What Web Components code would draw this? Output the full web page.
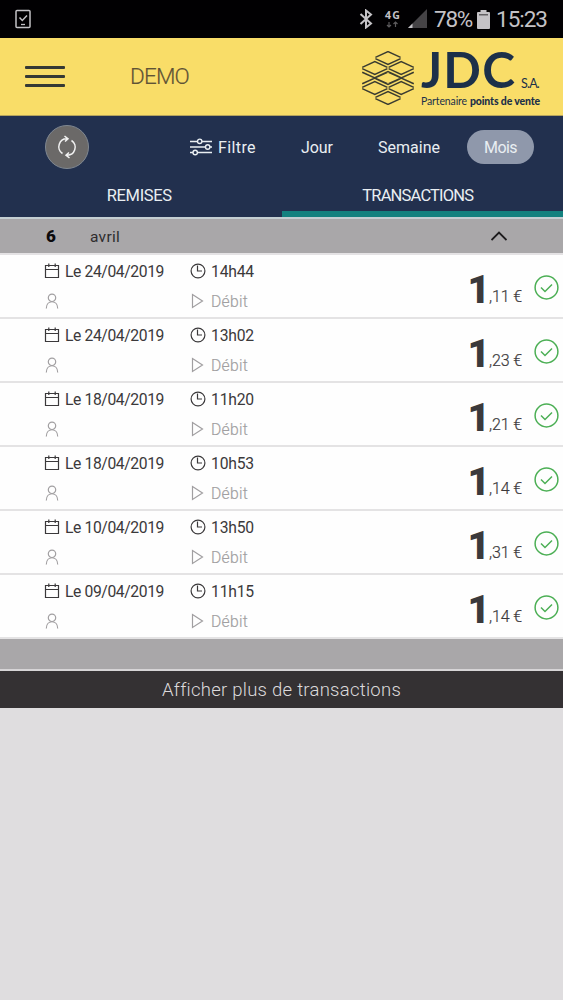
<!DOCTYPE html>
<html lang="fr">
<head>
<meta charset="utf-8">
<title>Transactions</title>
<style>
html, body { margin: 0; background: #dfdddf; }
body { font-family: Roboto, "Liberation Sans", sans-serif; }
</style>
</head>
<body>
<pos-app></pos-app>
<script>
// Text set to a given width by spreading its letters
class FitText extends HTMLElement {
  constructor() {
    super();
    this.attachShadow({ mode: 'open' });
    this.shadowRoot.innerHTML = `
    <style>
    :host { display: inline-block; white-space: nowrap; }
    span { display: inline-block; }
    </style>
    <span><slot></slot></span>
    `;
  }

  connectedCallback() {
    const width = parseFloat(this.getAttribute('width'));
    const span = this.shadowRoot.querySelector('span');
    span.style.letterSpacing = '0';
    const natural = span.getBoundingClientRect().width;
    const count = this.textContent.length;
    if (width && natural) {
      span.style.letterSpacing = `${(width - natural) / count}px`;
    }
  }
}
customElements.define('fit-text', FitText);

class StatusBar extends HTMLElement {
  constructor() {
    super();
    this.attachShadow({ mode: 'open' });
    this.shadowRoot.innerHTML = `
    <style>
    :host {
      display: flex;
      align-items: center;
      height: 38px;
      box-sizing: border-box;
      padding: 0 16px 0 15px;
      background: #010002;
      color: #c4c2c6;
      font-size: 22.5px;
    }
    svg { display: block; flex: none; }
    .spacer { flex: 1; }
    .net { margin: 0 7px 0 12px; }
    .net b { display: block; font: 700 10.5px/11px "Noto Sans", sans-serif; }
    .battery { margin: 0 6px 0 5px; }
    </style>
    <svg width="16" height="20" viewBox="0 0 16 20" fill="none" stroke="#c4c2c6">
      <rect x="1" y="1.5" width="14" height="17" rx="1" stroke-width="1.5"/>
      <path d="M4.5 8.5l2.8 3L12 6.5" stroke-width="1.5"/>
      <path d="M6 15.5h4" stroke-width="1.3"/>
    </svg>
    <div class="spacer"></div>
    <svg width="14" height="20" viewBox="0 0 14 20" fill="none" stroke="#c4c2c6" stroke-width="2">
      <path d="M1.5 5L12 14.5L7 18.5V1.5L12 5.5L1.5 15"/>
    </svg>
    <div class="net">
      <b><fit-text width="16">4G</fit-text></b>
      <svg width="16" height="7" viewBox="0 0 16 7" fill="none" stroke="#5d5b5e" stroke-width="1.2">
        <path d="M4 1v5M2 4l2 2l2-2M10.5 6V1M8.5 3l2-2l2 2"/>
      </svg>
    </div>
    <svg width="19" height="20" viewBox="0 0 19 20">
      <path d="M19 0V19H0z" fill="#454346"/>
      <path d="M4.5 14.5V19H0z" fill="#c4c2c6"/>
    </svg>
    <fit-text width="38" style="margin-left:7px">78%</fit-text>
    <svg class="battery" width="13" height="19" viewBox="0 0 13 19">
      <path d="M3.5 0h6v2H12q1 0 1 1v15q0 1-1 1H1q-1 0-1-1V3q0-1 1-1h2.5z" fill="#c4c2c6"/>
      <path d="M2 4h9v1.5H2z" fill="#636164"/>
    </svg>
    <fit-text width="51">15:23</fit-text>
    `;
  }
}
customElements.define('status-bar', StatusBar);

class JdcLogo extends HTMLElement {
  constructor() {
    super();
    // centres of the seven tiles of the mark
    const tiles = [[27, 7], [13.8, 17], [40.2, 17], [27, 27], [13.8, 37], [40.2, 37], [27, 47]];
    const up = (x, y) => `M${x - 12.6} ${y - 0.6}L${x} ${y - 6.4}L${x + 12.6} ${y - 0.6}`;
    const down = (x, y) => `M${x - 12.6} ${y + 0.6}L${x} ${y + 6.4}L${x + 12.6} ${y + 0.6}`;
    // the outer columns carry a second edge between their tiles
    const d = tiles.map(([x, y]) => up(x, y) + down(x, y)).join('')
      + [13.8, 40.2].map((x) => down(x, 20.6) + up(x, 33.4)).join('');
    this.attachShadow({ mode: 'open' });
    this.shadowRoot.innerHTML = `
    <style>
    :host { display: flex; color: #1c3049; padding-top: 4px; }
    svg { display: block; flex: none; margin-top: 1px; }
    .words { margin-left: 6px; font-family: Lato, sans-serif; }
    .name { display: flex; align-items: baseline; height: 45px; line-height: 39px; font-size: 49.5px; font-weight: 700; }
    .sa { font-size: 12.5px; font-weight: 400; margin: 0 -1px 0 5px; }
    .tag { font-size: 10.5px; line-height: 12px; white-space: nowrap; }
    .tag b { font-weight: 900; margin-left: 3px; }
    </style>
    <svg width="54" height="54" viewBox="0 0 54 54" fill="none" stroke="#3b3c31" stroke-width="1.5">
      <path d="${d}"/>
    </svg>
    <div class="words">
      <div class="name"><fit-text width="95">JDC</fit-text><fit-text class="sa" width="18">S.A.</fit-text></div>
      <div class="tag"><fit-text width="46">Partenaire</fit-text><b><fit-text width="70">points de vente</fit-text></b></div>
    </div>
    `;
  }
}
customElements.define('jdc-logo', JdcLogo);

class AppHeader extends HTMLElement {
  constructor() {
    super();
    this.attachShadow({ mode: 'open' });
    this.shadowRoot.innerHTML = `
    <style>
    :host {
      display: flex;
      align-items: center;
      height: 78px;
      box-sizing: border-box;
      padding: 0 23px 0 25px;
      background: #f9dd68;
      border-bottom: 1px solid #b5a35d;
    }
    .burger { display: grid; gap: 5.5px; width: 40px; }
    .burger i { height: 3.6px; border-radius: 1px; background: #363934; }
    .title { margin: -1px 0 0 65px; font-size: 22.5px; font-weight: 300; color: #5f5336; -webkit-text-stroke: 0.2px #5f5336; }
    jdc-logo { margin-left: auto; }
    </style>
    <div class="burger"><i></i><i></i><i></i></div>
    <fit-text class="title" width="59">${this.getAttribute('merchant')}</fit-text>
    <jdc-logo></jdc-logo>
    `;
  }
}
customElements.define('app-header', AppHeader);

class FilterBar extends HTMLElement {
  constructor() {
    super();
    this.attachShadow({ mode: 'open' });
    this.shadowRoot.innerHTML = `
    <style>
    :host {
      display: flex;
      align-items: center;
      height: 62px;
      color: #e9eef2;
      font-size: 16px;
      padding-left: 45px;
    }
    svg { display: block; }
    .refresh {
      width: 44px;
      height: 44px;
      box-sizing: border-box;
      border: 1px solid #7f8791;
      border-radius: 50%;
      background: #6b6968;
      display: grid;
      place-items: center;
    }
    .sliders { margin: 0 6px 0 101px; }
    .jour { margin-left: 45px; }
    .semaine { margin-left: 45px; }
    .mois {
      margin-left: 27px;
      width: 67px;
      height: 34px;
      line-height: 35px;
      text-align: center;
      border-radius: 17px;
      background: #8f98ab;
    }
    </style>
    <div class="refresh">
      <svg width="20" height="24" viewBox="0 0 20 24" fill="none" stroke="#f2f2f2" stroke-width="1.5">
        <path d="M5.5 18.5A8 8 0 0 1 10.5 3.8M7.5 1l3.5 2.8L8 6.5"/>
        <path d="M14.5 5.5A8 8 0 0 1 9.5 20.2M12.5 23l-3.5-2.8L12 17.5"/>
      </svg>
    </div>
    <svg class="sliders" width="22" height="18" viewBox="0 0 22 18" fill="none" stroke="#e9eef2" stroke-width="1.4">
      <path d="M0 3.5h7.5M12 3.5h10M0 9h15.5M20 9h2M0 14.5h3M7.5 14.5H22"/>
      <circle cx="9.7" cy="3.3" r="2.2"/><circle cx="17.7" cy="9" r="2.2"/><circle cx="5.2" cy="14.5" r="2.2"/>
    </svg>
    <fit-text width="38">Filtre</fit-text>
    <fit-text class="jour" width="32">Jour</fit-text>
    <fit-text class="semaine" width="62">Semaine</fit-text>
    <div class="mois"><fit-text width="33">Mois</fit-text></div>
    `;
  }
}
customElements.define('filter-bar', FilterBar);

class TabBar extends HTMLElement {
  constructor() {
    super();
    this.attachShadow({ mode: 'open' });
    this.shadowRoot.innerHTML = `
    <style>
    :host { display: grid; grid-template: 39px / 1fr 1fr; height: 39px; color: #e9eef2; font-size: 16.5px; text-align: center; }
    div { height: 39px; line-height: 35px; box-sizing: border-box; padding-right: 3px; }
    .on { padding-right: 9px; border-bottom: 6px solid #13817f; }
    </style>
    <div><fit-text width="65">REMISES</fit-text></div>
    <div class="on"><fit-text width="111">TRANSACTIONS</fit-text></div>
    `;
  }
}
customElements.define('tab-bar', TabBar);

class MonthHeader extends HTMLElement {
  constructor() {
    super();
    this.attachShadow({ mode: 'open' });
    this.shadowRoot.innerHTML = `
    <style>
    :host {
      display: flex;
      align-items: center;
      height: 38px;
      box-sizing: border-box;
      border-top: 2px solid #c4ced2;
      border-bottom: 2px solid #e4e2e4;
      background: #a9a7a9;
      padding: 0 56px 0 46px;
      color: #2e2c2e;
      font-size: 15.5px;
    }
    b { width: 44px; font-size: 17px; font-weight: 900; color: #0c0a0c; }
    svg { margin-left: auto; }
    </style>
    <b>${this.getAttribute('count')}</b>
    <fit-text width="30" style="padding-top:1px">${this.getAttribute('month')}</fit-text>
    <svg width="16" height="10" viewBox="0 0 16 10" fill="none" stroke="#1c1a1c" stroke-width="1.8"><path d="M0.5 9L8 1.5L15.5 9"/></svg>
    `;
  }
}
customElements.define('month-header', MonthHeader);

class TransactionRow extends HTMLElement {
  constructor() {
    super();
    const [units, cents] = this.getAttribute('amount').split(',');
    this.attachShadow({ mode: 'open' });
    this.shadowRoot.innerHTML = `
    <style>
    :host {
      display: flex;
      height: 64px;
      box-sizing: border-box;
      border-bottom: 2px solid #e4e3e4;
      background: #fefefe;
      padding: 1px 4px 0 44px;
      color: #3b393b;
      font-size: 15.7px;
    }
    svg { display: block; flex: none; fill: none; stroke: currentColor; stroke-width: 1.2; }
    .grid { display: grid; grid-template-columns: 146px 90px; grid-template-rows: 31px 29px; align-items: center; height: 60px; }
    .cell { display: flex; align-items: center; gap: 5px; }
    .cell svg { margin-top: -1px; }
    .muted { color: #a19fa1; font-weight: 300; -webkit-text-stroke: 0.2px; }
    .amount { margin-left: auto; display: flex; align-items: baseline; line-height: 68px; }
    .amount b { font-size: 39px; font-weight: 900; margin-right: -1px; }
    .cents { font-weight: 300; font-size: 16px; -webkit-text-stroke: 0.2px; line-height: 20px; margin-bottom: 1px; transform: translateY(-1px); }
    .ok { color: #4caf55; margin: 19px 0 0 12px; stroke-width: 1.5; }
    </style>
    <div class="grid">
      <div class="cell">
        <svg width="16" height="16" viewBox="0 0 16 16"><path d="M1.5 2.5h13v12h-13zM1.5 6.5h13M4.8 0.5v3.5M11.2 0.5v3.5"/></svg>
        <fit-text width="99">Le ${this.getAttribute('date')}</fit-text>
      </div>
      <div class="cell">
        <svg width="16" height="16" viewBox="0 0 16 16"><circle cx="8" cy="8" r="6.9"/><path d="M7.5 2.5V8h4.5"/></svg>
        <fit-text width="43">${this.getAttribute('time')}</fit-text>
      </div>
      <div class="cell muted">
        <svg width="16" height="16" viewBox="0 0 16 16"><circle cx="8" cy="4.8" r="3.7"/><path d="M2.3 15.5C2.3 6.5 13.7 6.5 13.7 15.5"/></svg>
      </div>
      <div class="cell muted">
        <svg width="16" height="16" viewBox="0 0 16 16"><path d="M2.5 1.5L12.5 8L2.5 14.5z"/></svg>
        <fit-text width="37">Débit</fit-text>
      </div>
    </div>
    <div class="amount"><b>${units}</b><fit-text class="cents" width="33">,${cents} €</fit-text></div>
    <svg class="ok" width="25" height="25" viewBox="0 0 25 25"><circle cx="12.5" cy="12.5" r="11.4"/><path d="M7 12.5l4 4L18 9.5"/></svg>
    `;
  }
}
customElements.define('transaction-row', TransactionRow);

class PosApp extends HTMLElement {
  constructor() {
    super();
    const rows = [
      ['24/04/2019', '14h44', '1,11'],
      ['24/04/2019', '13h02', '1,23'],
      ['18/04/2019', '11h20', '1,21'],
      ['18/04/2019', '10h53', '1,14'],
      ['10/04/2019', '13h50', '1,31'],
      ['09/04/2019', '11h15', '1,14']
    ];
    this.attachShadow({ mode: 'open' });
    this.shadowRoot.innerHTML = `
    <style>
    :host { display: block; height: 1000px; overflow: hidden; background: #dfdddf; }
    .nav { background: #22304e; }
    .gap { height: 30px; background: #a9a7a9; border-bottom: 2px solid #d6d4d6; }
    .more { height: 37px; line-height: 38px; text-align: center; background: #343133; color: #dcdadc; font-size: 18.5px; font-weight: 300; }
    </style>
    <status-bar></status-bar>
    <app-header merchant="DEMO"></app-header>
    <div class="nav">
      <filter-bar></filter-bar>
      <tab-bar></tab-bar>
    </div>
    <month-header count="6" month="avril"></month-header>
    ${rows.map(([date, time, amount]) => `<transaction-row date="${date}" time="${time}" amount="${amount}"></transaction-row>`).join('')}
    <div class="gap"></div>
    <div class="more"><fit-text width="238">Afficher plus de transactions</fit-text></div>
    `;
  }
}
customElements.define('pos-app', PosApp);
</script>
</body>
</html>
